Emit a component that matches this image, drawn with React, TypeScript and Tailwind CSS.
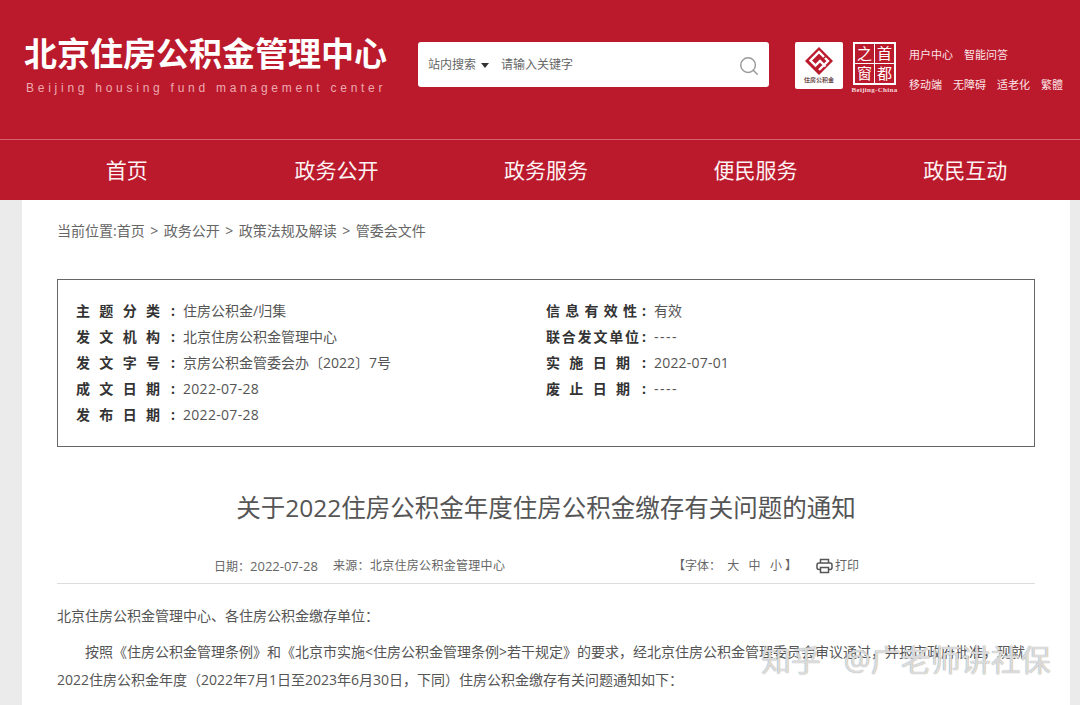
import { Search } from "lucide-react";

const navItems = ["首页", "政务公开", "政务服务", "便民服务", "政民互动"];

const leftInfo = [
  { label: "主题分类", value: "住房公积金/归集", valueClass: "" },
  { label: "发文机构", value: "北京住房公积金管理中心", valueClass: "" },
  { label: "发文字号", value: "京房公积金管委会办〔2022〕7号", valueClass: "" },
  { label: "成文日期", value: "2022-07-28", valueClass: "tracking-[0.3px]" },
  { label: "发布日期", value: "2022-07-28", valueClass: "tracking-[0.3px]" },
];

const rightInfo = [
  { label: "信息有效性", value: "有效", labelClass: "w-[91px]", valueClass: "" },
  { label: "联合发文单位", value: "----", labelClass: "w-[93px]", valueClass: "tracking-[1.5px]" },
  { label: "实施日期", value: "2022-07-01", labelClass: "w-[84px]", valueClass: "tracking-[0.2px]" },
  { label: "废止日期", value: "----", labelClass: "w-[84px]", valueClass: "tracking-[1.5px]" },
];

function FundLogo() {
  return (
    <div className="flex h-[47px] w-[48px] flex-col items-center rounded-[2px] bg-white pt-[4px]">
      <svg width="30" height="30" viewBox="0 0 30 30">
        <path d="M15 1 L29 15 L15 29 L1 15 Z" fill="#bb1a2d" />
        <path
          d="M20 11 L15 6 L6.5 14.5 L11.5 19.5 L16 15 L21.5 20.5 M15 24 L24 15 L21 12"
          fill="none"
          stroke="#fff"
          strokeWidth="2.4"
        />
      </svg>
      <span className="mt-[1px] text-[6px] leading-[7px] font-bold whitespace-nowrap text-[#6b4a4a]">
        住房公积金
      </span>
    </div>
  );
}

function CapitalLogo() {
  return (
    <div className="flex w-[47px] flex-col items-center">
      <div className="grid h-[43px] w-[43px] grid-cols-2 gap-[1px] border-2 border-white bg-white text-[15px] leading-none text-white">
        <span className="flex items-center justify-center bg-[#bb1a2d]">之</span>
        <span className="flex items-center justify-center bg-[#bb1a2d]">首</span>
        <span className="flex items-center justify-center bg-[#bb1a2d]">窗</span>
        <span className="flex items-center justify-center bg-[#bb1a2d]">都</span>
      </div>
      <span className="mt-[1px] font-['Liberation_Serif',serif] text-[7px] leading-[8px] font-bold tracking-[0.3px] whitespace-nowrap text-[#f6d9dc]">
        Beijing-China
      </span>
    </div>
  );
}

export default function App() {
  return (
    <div className="relative h-[705px] w-[1080px] overflow-hidden bg-[#ebebeb] font-['Open_Sans','Noto_Sans_CJK_SC',sans-serif]">
      <header className="bg-[#bb1a2d]">
        <div className="flex h-[139px] items-start pl-[24px]">
          <div className="w-[394px] pt-[30px]">
            <h1 className="font-['Noto_Sans_CJK_SC',sans-serif] text-[33px] leading-[44px] font-bold whitespace-nowrap text-white">
              北京住房公积金管理中心
            </h1>
            <p className="mt-[7px] pl-[2px] font-['Liberation_Sans',sans-serif] text-[12px] leading-[14px] tracking-[3.74px] whitespace-nowrap text-[#eda9b0]">
              Beijing housing fund management center
            </p>
          </div>

          <div className="mt-[42px] flex h-[45px] w-[351px] items-center rounded-[3px] bg-white pr-[9px] pl-[10px] text-[12px] text-[#666]">
            <span>站内搜索</span>
            <span className="mt-[1px] ml-[5px] h-0 w-0 border-x-[4.5px] border-t-[5px] border-x-transparent border-t-[#333]" />
            <span className="ml-[12px]">请输入关键字</span>
            <Search className="mt-[2px] ml-auto text-[#999]" size={22} strokeWidth={1.6} />
          </div>

          <div className="mt-[42px] ml-[26px]">
            <FundLogo />
          </div>
          <div className="mt-[42px] ml-[8px]">
            <CapitalLogo />
          </div>

          <div className="mt-[46px] ml-[11px] flex flex-col gap-[12px] text-[11px] leading-[18px] text-[#fbe4e6]">
            <div className="flex gap-[11px]">
              <span>用户中心</span>
              <span>智能问答</span>
            </div>
            <div className="flex gap-[11px] whitespace-nowrap">
              <span>移动端</span>
              <span>无障碍</span>
              <span>适老化</span>
              <span>繁體</span>
            </div>
          </div>
        </div>

        <nav className="grid h-[61px] grid-cols-5 border-t border-[#d4636f] pt-[1px] pr-[10px] pl-[22px]">
          {navItems.map((item) => (
            <a key={item} className="flex items-center justify-center text-[21px] text-[#fdf2f3]">
              {item}
            </a>
          ))}
        </nav>
      </header>

      <main className="mr-[10px] ml-[22px] h-[505px] bg-white px-[35px]">
        <div className="flex h-[61px] items-center gap-[5.5px] text-[14px] text-[#666]">
          <span>当前位置:首页</span>
          <span>&gt;</span>
          <span>政务公开</span>
          <span>&gt;</span>
          <span>政策法规及解读</span>
          <span>&gt;</span>
          <span>管委会文件</span>
        </div>

        <section className="mt-[18px] flex h-[168px] border border-[#666] pt-[17px] pl-[18px] text-[14px] text-[#555]">
          <div className="w-[470px]">
            {leftInfo.map((row) => (
              <div key={row.label} className="flex h-[26px] items-center">
                <span className="w-[84px] font-bold text-[#333] [text-align-last:justify]">{row.label}</span>
                <span className="w-[23px] pl-[11px] font-bold text-[#333]">:</span>
                <span className={row.valueClass}>{row.value}</span>
              </div>
            ))}
          </div>
          <div>
            {rightInfo.map((row) => (
              <div key={row.label} className="flex h-[26px] items-center">
                <div className="w-[93px]">
                  <span className={`block font-bold text-[#333] [text-align-last:justify] ${row.labelClass}`}>
                    {row.label}
                  </span>
                </div>
                <span className="w-[15px] pl-[3px] font-bold text-[#333]">:</span>
                <span className={row.valueClass}>{row.value}</span>
              </div>
            ))}
          </div>
        </section>

        <h2 className="mt-[43px] text-center text-[24.5px] leading-[36px] text-[#555]">
          关于2022住房公积金年度住房公积金缴存有关问题的通知
        </h2>

        <div className="mt-[28px] flex h-[30px] items-start border-b border-[#ddd] pt-[3px] pl-[157px] text-[12px] leading-[18px] text-[#666]">
          <span className="w-[119px] whitespace-nowrap">
            日期：<span className="text-[13px]">2022-07-28</span>
          </span>
          <span className="w-[340px] tracking-[0.3px] whitespace-nowrap">来源：北京住房公积金管理中心</span>
          <span className="w-[143px] whitespace-nowrap">【字体：&nbsp; 大&nbsp;&nbsp;&nbsp;中&nbsp;&nbsp;&nbsp;小 】</span>
          <svg className="mt-[1px]" width="17" height="16" viewBox="0 0 17 16" fill="none" stroke="#555" strokeWidth="1.5">
            <path d="M4.5 5V1.5h8V5" />
            <rect x="1" y="5" width="15" height="6.5" rx="2" />
            <rect x="4.5" y="9.5" width="8" height="5" fill="#fff" />
          </svg>
          <span className="ml-[2px]">打印</span>
        </div>

        <article className="pt-[18px] text-[14px] leading-[28px] text-[#555]">
          <p>北京住房公积金管理中心、各住房公积金缴存单位：</p>
          <p className="mt-[8px] indent-[28px]">
            按照《住房公积金管理条例》和《北京市实施&lt;住房公积金管理条例&gt;若干规定》的要求，经北京住房公积金管理委员会审议通过，并报市政府批准，现就2022住房公积金年度（2022年7月1日至2023年6月30日，下同）住房公积金缴存有关问题通知如下：
          </p>
        </article>
      </main>

      <div className="absolute top-[642px] left-[761px] text-[30px] leading-[36px] [word-spacing:15px] whitespace-nowrap text-[#ffffffb8] [text-shadow:0_0_1px_#777]">
        知乎 @广老师讲社保
      </div>
    </div>
  );
}
